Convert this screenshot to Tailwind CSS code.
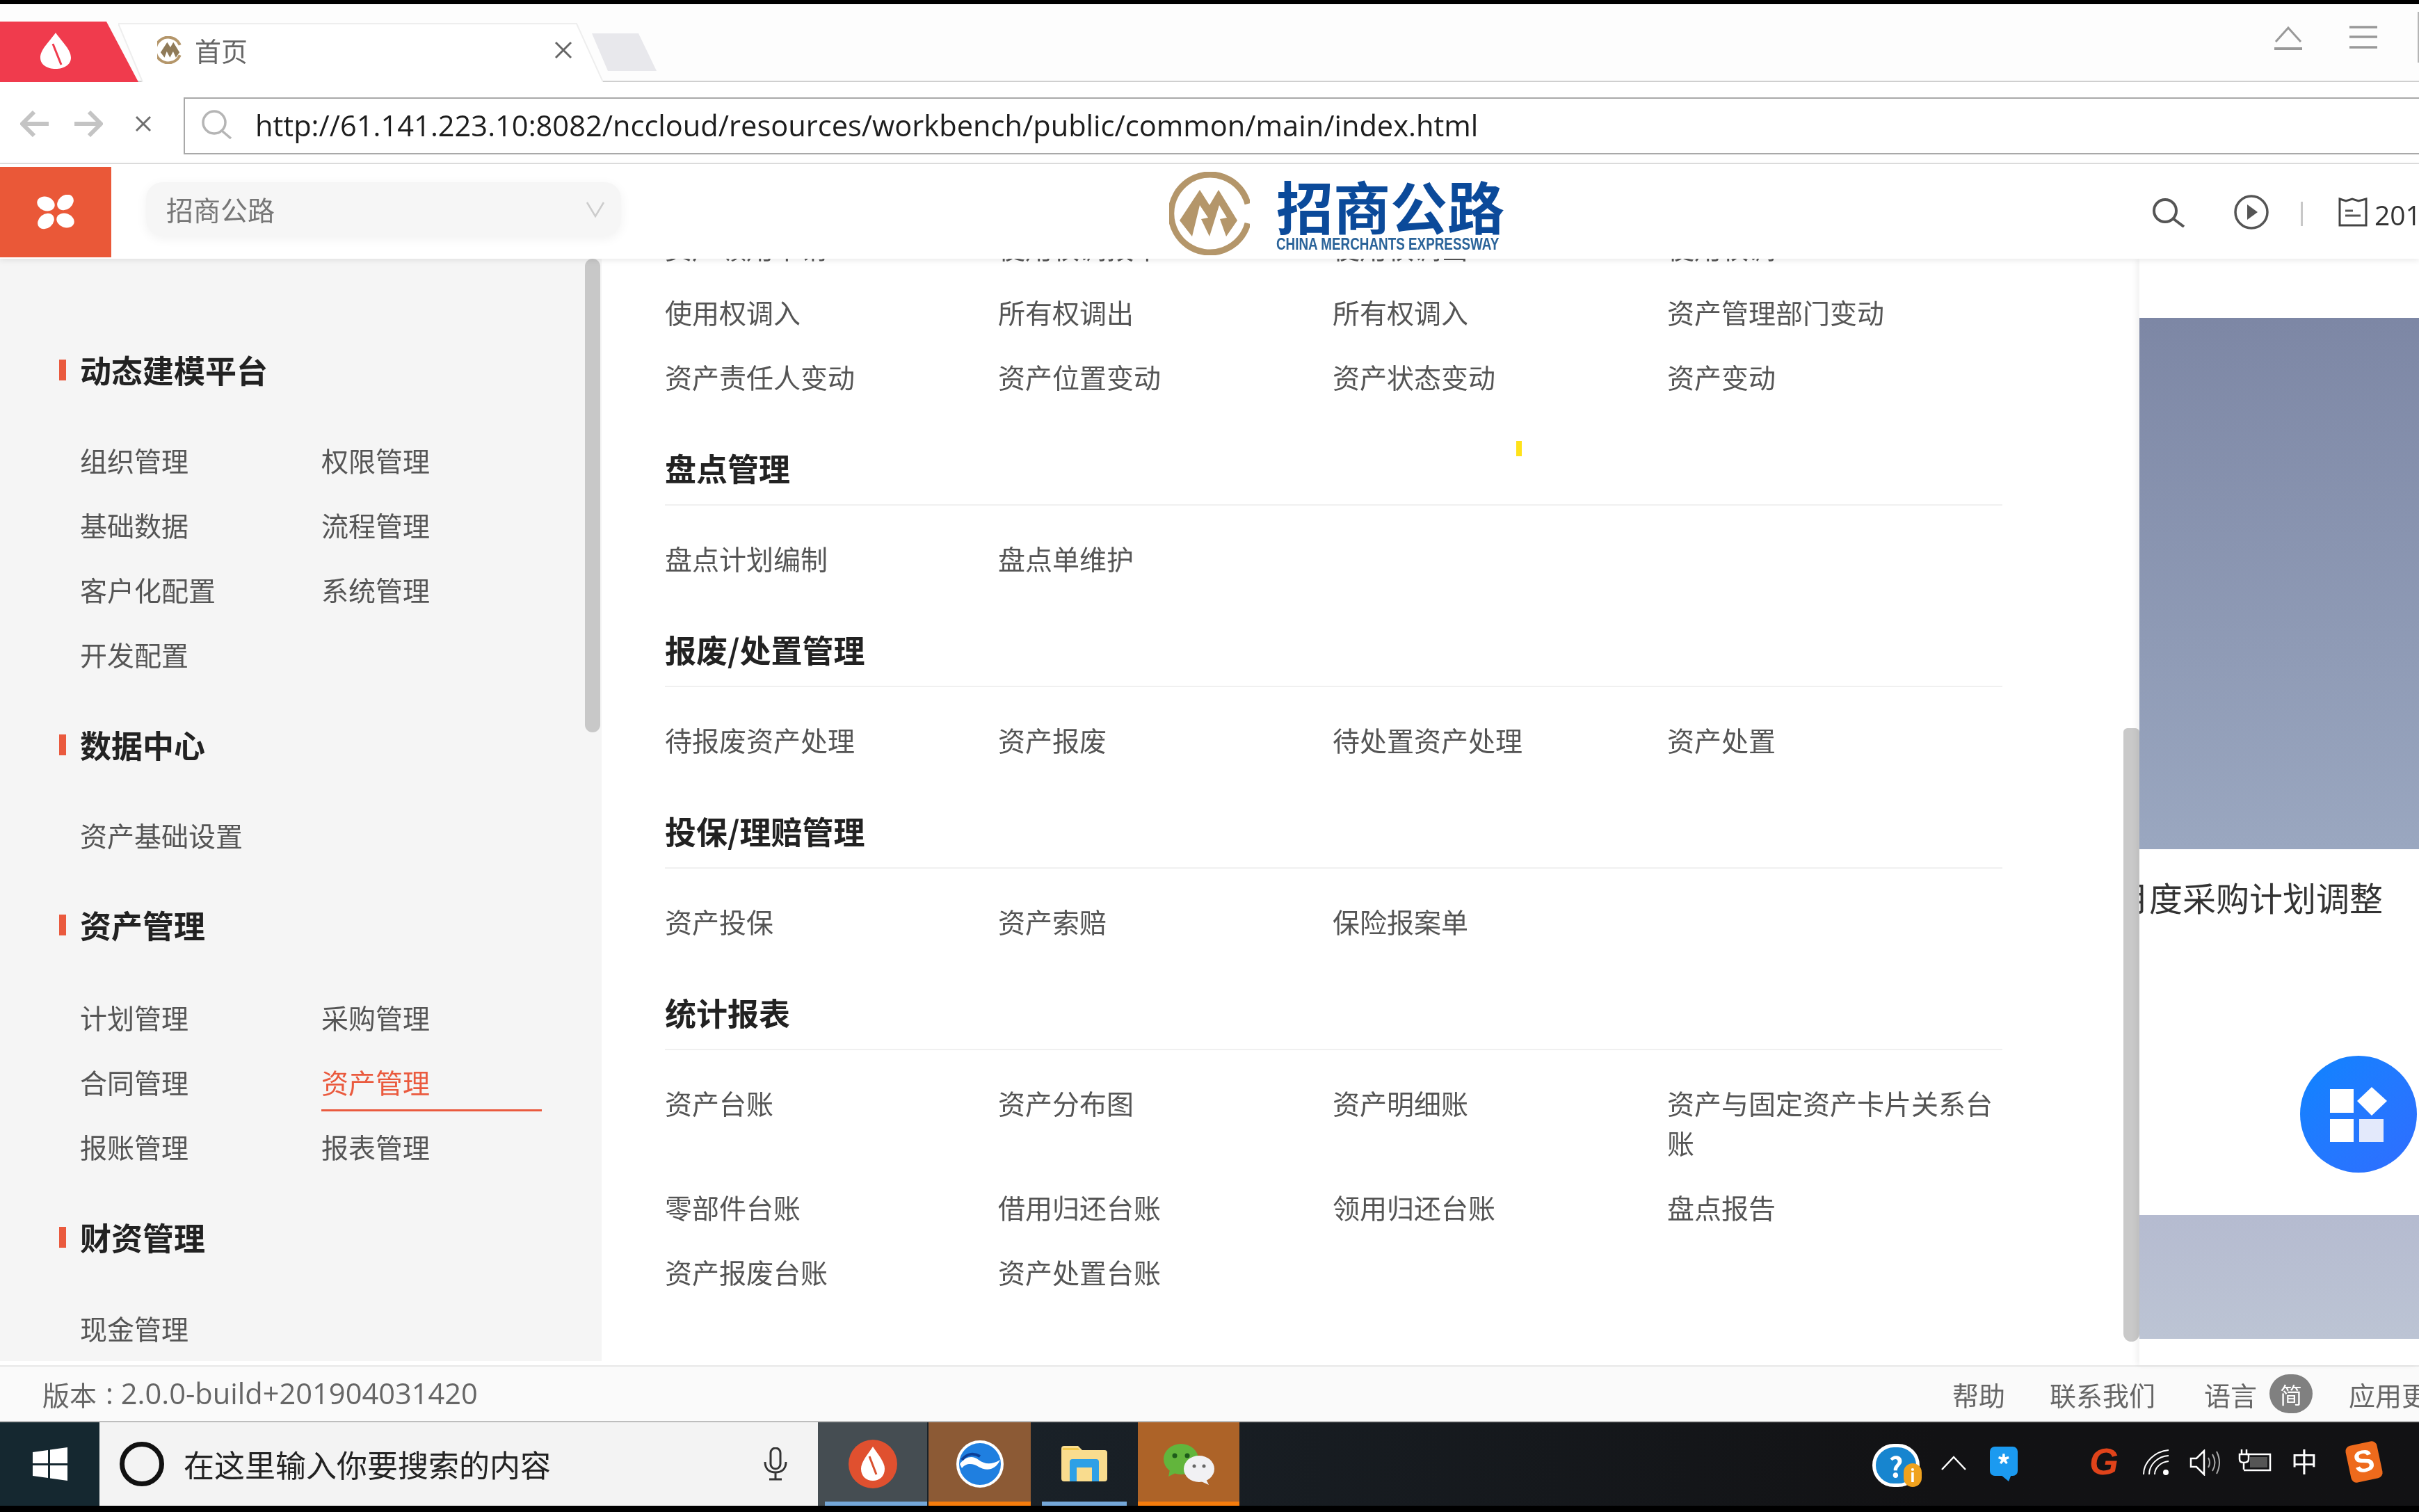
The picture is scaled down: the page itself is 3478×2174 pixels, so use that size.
<!DOCTYPE html>
<html lang="zh-CN">
  <head>
    <meta charset="UTF-8" />
    <title>首页</title>
    <script src="https://cdn.jsdelivr.net/npm/@tailwindcss/browser@4"></script>
  </head>
  <body class="bg-black">
    <div class="w-[3478px] h-[2174px] overflow-hidden flex flex-col bg-black [font-family:'Noto_Sans_CJK_SC',sans-serif] blur-[0.7px]">
      <div class="h-[6px] shrink-0 bg-black"></div>

      <!-- tab strip -->
      <div class="h-[112px] shrink-0 bg-[#fdfdfd] border-b-2 border-[#cfcfcf] flex relative">
        <div class="mt-[25px] w-[199px] h-[87px] shrink-0 bg-[#f03b4d] [clip-path:polygon(0_0,153px_0,199px_100%,0_100%)] flex pl-[57px] pt-[15px]">
          <svg width="46" height="54" viewBox="0 0 46 54"><path d="M23 1C32 14 45 25 45 37C45 47 35 53 23 53C11 53 1 47 1 37C1 25 14 14 23 1Z" fill="#fff"/><path d="M19 17L31 47" stroke="#f03b4d" stroke-width="3"/></svg>
        </div>
        <div class="-ml-[29px] mt-[27px] w-[697px] h-[85px] shrink-0 relative flex items-center pl-[56px] pr-[44px] pb-[8px]">
          <svg class="absolute left-0 top-0" width="697" height="85" viewBox="0 0 697 85"><path d="M35 85L0 1H659L697 85" fill="#fff" stroke="#eeeeee" stroke-width="2"/></svg>
          <svg class="relative shrink-0" width="38" height="40" viewBox="0 0 116 120"><path d="M100 38A56 56 0 1 0 100 82" fill="none" stroke="#b4966a" stroke-width="12"/><path d="M44 26L58 48L71 26L98 70L82 93L70 66L56 93L42 66L32 93L15 70Z" fill="#8f7a58"/></svg>
          <span class="relative ml-[16px] text-[38px] leading-none text-[#666]">首页</span>
          <svg class="relative ml-auto" width="26" height="26" viewBox="0 0 26 26"><path d="M2 2L24 24M24 2L2 24" stroke="#666" stroke-width="3"/></svg>
        </div>
        <div class="-ml-[16px] mt-[42px] w-[93px] h-[54px] shrink-0 bg-[#e8e8ec] [clip-path:polygon(0_0,67px_0,93px_100%,23px_100%)]"></div>
        <svg class="ml-[2325px] mt-[31px] shrink-0" width="42" height="36" viewBox="0 0 42 36"><path d="M3 23L21 3L39 23" fill="none" stroke="#999" stroke-width="3"/><path d="M1 33H41" stroke="#999" stroke-width="4"/></svg>
        <svg class="ml-[66px] mt-[30px] shrink-0" width="42" height="34" viewBox="0 0 42 34"><path d="M1 3H41M1 17H41M1 32H41" stroke="#999" stroke-width="3.5"/></svg>
        <div class="ml-[57px] mt-[11px] w-[3px] h-[73px] bg-[#b5b5b5] shrink-0"></div>
      </div>

      <!-- address bar -->
      <div class="h-[118px] shrink-0 bg-white border-b-2 border-[#dedede] flex pl-[29px] pt-[22px]">
        <div class="h-[76px] flex items-center shrink-0">
          <svg width="42" height="38" viewBox="0 0 42 38"><path d="M20 2L3 19L20 36M3 19H41" fill="none" stroke="#c4c4c4" stroke-width="6"/></svg>
          <svg class="ml-[35px]" width="42" height="38" viewBox="0 0 42 38"><path d="M22 2L39 19L22 36M39 19H1" fill="none" stroke="#c4c4c4" stroke-width="6"/></svg>
          <svg class="ml-[46px]" width="24" height="24" viewBox="0 0 24 24"><path d="M2 2L22 22M22 2L2 22" stroke="#6e6e6e" stroke-width="3"/></svg>
        </div>
        <div class="ml-[46px] h-[82px] w-[3300px] shrink-0 bg-white border-2 border-[#a9a9a9] flex items-center pl-[22px]">
          <svg class="shrink-0 -mt-[4px]" width="46" height="42" viewBox="0 0 46 42"><circle cx="20" cy="18" r="16" fill="none" stroke="#b5b5b5" stroke-width="3.5"/><path d="M31 30L44 41" stroke="#b5b5b5" stroke-width="3.5"/></svg>
          <span class="ml-[33px] text-[41.6px] leading-none text-[#1d1d1d] whitespace-nowrap [font-family:'Open_Sans',sans-serif]">http://61.141.223.10:8082/nccloud/resources/workbench/public/common/main/index.html</span>
        </div>
      </div>

      <!-- app header -->
      <div class="h-[136px] shrink-0 bg-white flex relative z-10 pt-[4px] shadow-[0_3px_8px_rgba(0,0,0,0.08)]">
        <div class="w-[160px] h-[130px] shrink-0 bg-[#ea5838] flex items-center justify-center">
          <svg width="56" height="50" viewBox="0 0 56 50"><g fill="#fff"><ellipse cx="14" cy="13" rx="13" ry="10" transform="rotate(20 14 13)"/><ellipse cx="42" cy="11" rx="13" ry="10" transform="rotate(-40 42 11)"/><ellipse cx="14" cy="38" rx="13" ry="10" transform="rotate(-40 14 38)"/><ellipse cx="42" cy="37" rx="13" ry="10" transform="rotate(20 42 37)"/></g></svg>
        </div>
        <div class="ml-[50px] mt-[22px] w-[683px] h-[77px] shrink-0 bg-[#f6f6f6] rounded-[24px] shadow-[0_4px_16px_rgba(0,0,0,0.06)] flex items-center pl-[29px] pr-[23px]">
          <span class="text-[39px] leading-none text-[#777]">招商公路</span>
          <svg class="ml-auto" width="28" height="24" viewBox="0 0 28 24"><path d="M2 2L14 22L26 2" fill="none" stroke="#ccc" stroke-width="2.5"/></svg>
        </div>
        <svg class="ml-[788px] mt-[7px] shrink-0" width="116" height="120" viewBox="0 0 116 120"><path d="M113 46A56 56 0 1 0 113 74" fill="none" stroke="#b4966a" stroke-width="9"/><path d="M44 26L58 48L71 26L98 70L82 93L73 68L83 66L72 48L58 93L46 68L56 66L44 48L33 93L15 70Z" fill="#b4966a"/></svg>
        <div class="ml-[38px] mt-[13px] w-[328px] shrink-0 flex flex-col">
          <span class="text-[82px] leading-[84px] font-bold text-[#0b4a9a]">招商公路</span>
          <span class="text-[23px] leading-[22px] mt-[3px] font-bold text-[#2a6399] whitespace-nowrap origin-left scale-x-[0.82] [font-family:'Liberation_Sans',sans-serif]">CHINA MERCHANTS EXPRESSWAY</span>
        </div>
        <svg class="ml-[929px] mt-[45px] shrink-0" width="50" height="42" viewBox="0 0 50 42"><circle cx="21" cy="18" r="16" fill="none" stroke="#555" stroke-width="4"/><path d="M32 29L48 41" stroke="#555" stroke-width="4"/></svg>
        <svg class="ml-[70px] mt-[40px] shrink-0" width="50" height="50" viewBox="0 0 50 50"><circle cx="25" cy="25" r="23" fill="none" stroke="#555" stroke-width="3.5"/><path d="M19 14L34 25L19 36Z" fill="#555"/></svg>
        <div class="ml-[46px] mt-[50px] w-[3px] h-[35px] bg-[#c8c8c8] shrink-0"></div>
        <svg class="ml-[50px] mt-[43px] shrink-0" width="44" height="44" viewBox="0 0 44 44"><path d="M3 3L12 6L21 3L30 6L41 3V41H3Z" fill="none" stroke="#444" stroke-width="3"/><path d="M11 20H22M11 27H33" stroke="#555" stroke-width="3"/></svg>
        <span class="ml-[9px] mt-[50px] text-[39px] leading-[38px] text-[#333] whitespace-nowrap [font-family:'Open_Sans',sans-serif]">2019-04-03</span>
      </div>

      <!-- content -->
      <div class="h-[1591px] shrink-0 flex bg-white">
        <!-- side menu -->
        <div class="w-[865px] shrink-0 bg-[#f5f5f5] flex h-[1585px]">
          <div class="w-[841px] shrink-0 overflow-hidden pl-[85px] pt-[124px]">
            <div class="h-[72px] flex items-center"><i class="w-[10px] h-[30px] bg-[#ea5a3e]"></i><span class="ml-[20px] text-[45px] font-bold text-[#222]">动态建模平台</span></div>
            <div class="mt-[47px] grid grid-cols-[347px_347px] pl-[30px] text-[39px] text-[#555]">
              <div class="h-[93px] leading-[93px]">组织管理</div><div class="h-[93px] leading-[93px]">权限管理</div>
              <div class="h-[93px] leading-[93px]">基础数据</div><div class="h-[93px] leading-[93px]">流程管理</div>
              <div class="h-[93px] leading-[93px]">客户化配置</div><div class="h-[93px] leading-[93px]">系统管理</div>
              <div class="h-[93px] leading-[93px]">开发配置</div>
            </div>
            <div class="mt-[48px] h-[72px] flex items-center"><i class="w-[10px] h-[30px] bg-[#ea5a3e]"></i><span class="ml-[20px] text-[45px] font-bold text-[#222]">数据中心</span></div>
            <div class="mt-[47px] grid grid-cols-[347px_347px] pl-[30px] text-[39px] text-[#555]">
              <div class="h-[93px] leading-[93px]">资产基础设置</div>
            </div>
            <div class="mt-[47px] h-[72px] flex items-center"><i class="w-[10px] h-[30px] bg-[#ea5a3e]"></i><span class="ml-[20px] text-[45px] font-bold text-[#222]">资产管理</span></div>
            <div class="mt-[50px] grid grid-cols-[347px_347px] pl-[30px] text-[39px] text-[#555]">
              <div class="h-[93px] leading-[93px]">计划管理</div><div class="h-[93px] leading-[93px]">采购管理</div>
              <div class="h-[93px] leading-[93px]">合同管理</div><div class="h-[89px] w-[317px] leading-[93px] text-[#ea5a3e] border-b-[3px] border-[#ea5a3e]">资产管理</div>
              <div class="h-[93px] leading-[93px]">报账管理</div><div class="h-[93px] leading-[93px]">报表管理</div>
            </div>
            <div class="mt-[48px] h-[72px] flex items-center"><i class="w-[10px] h-[30px] bg-[#ea5a3e]"></i><span class="ml-[20px] text-[45px] font-bold text-[#222]">财资管理</span></div>
            <div class="mt-[48px] grid grid-cols-[347px_347px] pl-[30px] text-[39px] text-[#555]">
              <div class="h-[93px] leading-[93px]">现金管理</div>
            </div>
          </div>
          <div class="w-[24px] shrink-0">
            <div class="w-[22px] h-[681px] bg-[#c8c8c8] rounded-full"></div>
          </div>
        </div>

        <!-- main menu panel -->
        <div class="w-[2188px] shrink-0 overflow-hidden pl-[91px] relative h-[1585px]">
          <div class="-mt-[63px] w-[1923px] text-[39px] text-[#555]">
            <div class="grid grid-cols-[479px_481px_481px_482px]">
              <div class="py-[18px] leading-[57px]">资产领用申请</div><div class="py-[18px] leading-[57px]">使用权调拨单</div><div class="py-[18px] leading-[57px]">使用权调出</div><div class="py-[18px] leading-[57px]">使用权调</div>
              <div class="py-[18px] leading-[57px]">使用权调入</div><div class="py-[18px] leading-[57px]">所有权调出</div><div class="py-[18px] leading-[57px]">所有权调入</div><div class="py-[18px] leading-[57px]">资产管理部门变动</div>
              <div class="py-[18px] leading-[57px]">资产责任人变动</div><div class="py-[18px] leading-[57px]">资产位置变动</div><div class="py-[18px] leading-[57px]">资产状态变动</div><div class="py-[18px] leading-[57px]">资产变动</div>
            </div>

            <div class="mt-[33px] h-[106px] border-b-2 border-[#f0f0f0] flex items-start pt-[29px] text-[45px] leading-[46px] font-bold text-[#222]">盘点管理</div>
            <div class="mt-[29px] grid grid-cols-[479px_481px_481px_482px]">
              <div class="py-[18px] leading-[57px]">盘点计划编制</div><div class="py-[18px] leading-[57px]">盘点单维护</div>
            </div>

            <div class="mt-[33px] h-[106px] border-b-2 border-[#f0f0f0] flex items-start pt-[29px] text-[45px] leading-[46px] font-bold text-[#222]">报废/处置管理</div>
            <div class="mt-[29px] grid grid-cols-[479px_481px_481px_482px]">
              <div class="py-[18px] leading-[57px]">待报废资产处理</div><div class="py-[18px] leading-[57px]">资产报废</div><div class="py-[18px] leading-[57px]">待处置资产处理</div><div class="py-[18px] leading-[57px]">资产处置</div>
            </div>

            <div class="mt-[33px] h-[106px] border-b-2 border-[#f0f0f0] flex items-start pt-[29px] text-[45px] leading-[46px] font-bold text-[#222]">投保/理赔管理</div>
            <div class="mt-[29px] grid grid-cols-[479px_481px_481px_482px]">
              <div class="py-[18px] leading-[57px]">资产投保</div><div class="py-[18px] leading-[57px]">资产索赔</div><div class="py-[18px] leading-[57px]">保险报案单</div>
            </div>

            <div class="mt-[33px] h-[106px] border-b-2 border-[#f0f0f0] flex items-start pt-[29px] text-[45px] leading-[46px] font-bold text-[#222]">统计报表</div>
            <div class="mt-[29px] grid grid-cols-[479px_481px_481px_482px]">
              <div class="py-[18px] leading-[57px]">资产台账</div><div class="py-[18px] leading-[57px]">资产分布图</div><div class="py-[18px] leading-[57px]">资产明细账</div><div class="py-[18px] leading-[57px]">资产与固定资产卡片关系台账</div>
              <div class="py-[18px] leading-[57px]">零部件台账</div><div class="py-[18px] leading-[57px]">借用归还台账</div><div class="py-[18px] leading-[57px]">领用归还台账</div><div class="py-[18px] leading-[57px]">盘点报告</div>
              <div class="py-[18px] leading-[57px]">资产报废台账</div><div class="py-[18px] leading-[57px]">资产处置台账</div>
            </div>
          </div>
          <!-- mouse cursor mark -->
          <div class="absolute left-[1315px] top-[262px] w-[8px] h-[22px] bg-[#ffe21a]"></div>
        </div>

        <div class="w-[23px] shrink-0">
          <div class="mt-[675px] w-[23px] h-[882px] bg-[#c9c9c9] rounded-b-[12px] rounded-t-[6px]"></div>
        </div>

        <!-- workbench behind the menu -->
        <div class="flex-1 relative overflow-hidden shadow-[-4px_0_8px_rgba(0,0,0,0.06)]">
          <div class="mt-[85px] h-[764px] bg-gradient-to-b from-[#7d87a5] to-[#9aa7c0]"></div>
          <div class="h-[526px] bg-white pt-[40px] overflow-hidden">
            <div class="-ml-[34px] text-[48px] leading-[56px] text-[#333] whitespace-nowrap">月度采购计划调整</div>
          </div>
          <div class="h-[178px] bg-gradient-to-b from-[#b5bbd0] to-[#bcc4d4]"></div>
          <div class="absolute left-[231px] top-[1146px] w-[168px] h-[168px] rounded-full bg-gradient-to-br from-[#0a84ff] to-[#2f6dff] flex items-center justify-center">
            <svg width="82" height="79" viewBox="0 0 82 79"><g fill="#fff"><rect x="0" y="3" width="34" height="34"/><path d="M60 0L82 20L60 41L39 20Z"/><rect x="0" y="46" width="34" height="33"/><rect x="42" y="46" width="35" height="33" fill="#e3e9fb"/></g></svg>
          </div>
        </div>
      </div>

      <!-- status bar -->
      <div class="h-[82px] shrink-0 bg-[#fafafa] border-t-2 border-[#e8e8e8] border-b-2 border-b-[#bdbdbd] flex items-center text-[38px] text-[#666] whitespace-nowrap">
        <div class="w-[2807px] shrink-0 pl-[61px] flex items-center">
          <span class="text-[39px]">版本</span><span class="ml-[13px] text-[41.6px] leading-none [font-family:'Open_Sans',sans-serif]">: 2.0.0-build+201904031420</span>
        </div>
        <span>帮助</span>
        <span class="ml-[64px]">联系我们</span>
        <span class="ml-[70px]">语言</span>
        <span class="ml-[18px] w-[62px] h-[56px] shrink-0 rounded-full bg-[#808080] text-white text-[32px] flex items-center justify-center">简</span>
        <span class="ml-[52px]">应用更多</span>
      </div>

      <!-- windows taskbar -->
      <div class="h-[120px] shrink-0 flex bg-gradient-to-r from-[#1a2229] from-40% to-[#121214] to-80%">
        <div class="w-[143px] shrink-0 bg-[#152830] flex items-center pl-[47px]">
          <svg width="50" height="48" viewBox="0 0 50 48"><path d="M0 7L22 4V23H0ZM25 3.5L50 0V23H25ZM0 26H22V44L0 41ZM25 26H50V48L25 44.5Z" fill="#fff"/></svg>
        </div>
        <div class="w-[1033px] shrink-0 bg-[#f3f3f3] flex items-center pl-[29px]">
          <div class="w-[64px] h-[64px] shrink-0 rounded-full border-[7px] border-[#111]"></div>
          <span class="ml-[28px] w-[528px] shrink-0 text-[44px] leading-none text-[#222] whitespace-nowrap">在这里输入你要搜索的内容</span>
          <svg class="ml-[306px] shrink-0" width="34" height="48" viewBox="0 0 34 48"><rect x="10" y="1" width="14" height="30" rx="7" fill="none" stroke="#333" stroke-width="3"/><path d="M2 21C2 32 9 36 17 36C25 36 32 32 32 21M17 36V46M8 46H26" fill="none" stroke="#333" stroke-width="3"/></svg>
        </div>
        <div class="w-[157px] shrink-0 bg-[#454d52] relative flex items-center justify-center">
          <svg width="70" height="70" viewBox="0 0 70 70"><circle cx="35" cy="35" r="35" fill="#e0502f"/><path d="M35 10C43 22 52 32 52 42C52 53 44 59 35 59C26 59 18 53 18 42C18 32 27 22 35 10Z" fill="#fff"/><path d="M30 24L40 50" stroke="#d9502f" stroke-width="3"/></svg>
          <div class="absolute left-[10px] right-0 bottom-0 h-[6px] bg-[#74a7d8]"></div>
        </div>
        <div class="w-[2px] shrink-0"></div>
        <div class="w-[147px] shrink-0 bg-[#8c5a35] relative flex items-center justify-center">
          <svg width="68" height="68" viewBox="0 0 68 68"><circle cx="34" cy="34" r="32" fill="#1f7fe0" stroke="#fff" stroke-width="4"/><path d="M5 34C14 22 24 22 32 28C40 34 50 36 63 28C56 44 42 44 32 38C24 33 14 32 8 40Z" fill="#fff"/><path d="M8 28C16 18 26 18 34 23" fill="none" stroke="#0d3f97" stroke-width="4"/></svg>
          <div class="absolute left-0 right-0 bottom-0 h-[6px] bg-[#f57c0c]"></div>
        </div>
        <div class="w-[154px] shrink-0 relative flex items-center justify-center">
          <svg width="66" height="54" viewBox="0 0 66 54"><path d="M0 5Q0 1 4 1H24L30 7H62Q66 7 66 11V48Q66 52 62 52H4Q0 52 0 48Z" fill="#f9dc8e"/><path d="M2 4H24L26 7H2Z" fill="#f2c94c"/><path d="M12 52V24Q12 20 16 20H50Q54 20 54 24V52H44V32H22V52Z" fill="#2ea0e6"/></svg>
          <div class="absolute left-[16px] w-[122px] bottom-0 h-[6px] bg-[#74a7d8]"></div>
        </div>
        <div class="w-[146px] shrink-0 bg-[#ad6328] relative flex items-center justify-center">
          <svg width="74" height="60" viewBox="0 0 74 60"><ellipse cx="26" cy="23" rx="25" ry="22" fill="#62b53c"/><path d="M10 38L8 48L20 42Z" fill="#62b53c"/><circle cx="17" cy="18" r="3.5" fill="#1e5c1a"/><circle cx="35" cy="18" r="3.5" fill="#1e5c1a"/><ellipse cx="52" cy="37" rx="22" ry="19" fill="#f1f1f4"/><path d="M62 52L66 60L55 55Z" fill="#f1f1f4"/><circle cx="45" cy="33" r="2.5" fill="#666"/><circle cx="59" cy="33" r="2.5" fill="#666"/></svg>
          <div class="absolute left-0 right-0 bottom-0 h-[6px] bg-[#f57c0c]"></div>
        </div>

        <!-- tray -->
        <div class="ml-[910px] mt-[31px] w-[68px] h-[62px] shrink-0 rounded-full bg-[#1785cf] border-[5px] border-white flex items-center justify-center relative text-white font-bold text-[40px] leading-none">?
          <span class="absolute -right-[8px] -bottom-[5px] w-[26px] h-[34px] rounded-full bg-[#f0a21e] text-[24px] text-white flex items-center justify-center">i</span>
        </div>
        <svg class="ml-[30px] mt-[48px] shrink-0" width="38" height="22" viewBox="0 0 38 22"><path d="M2 20L19 2L36 20" fill="none" stroke="#fff" stroke-width="2.5"/></svg>
        <div class="ml-[33px] mt-[35px] w-[40px] h-[42px] shrink-0 rounded-[7px] bg-[#1b9af0] text-white font-bold text-[38px] leading-[50px] text-center relative">*
          <svg class="absolute left-[15px] top-[40px]" width="16" height="10" viewBox="0 0 16 10"><path d="M0 0H16L12 10Z" fill="#1b9af0"/></svg>
        </div>
        <span class="ml-[103px] mt-[24px] w-[42px] shrink-0 text-[54px] leading-[64px] font-bold italic text-[#e0431a] [font-family:'Liberation_Sans',sans-serif]">G</span>
        <svg class="ml-[34px] mt-[39px] shrink-0" width="40" height="38" viewBox="0 0 40 38"><g fill="none" stroke="#fff" stroke-width="2"><path d="M2 36C2 18 18 3 38 1"/><path d="M10 36C10 22 22 10 38 9"/><path d="M18 36C18 26 27 18 38 17"/></g><circle cx="34" cy="33" r="4" fill="#fff"/></svg>
        <svg class="ml-[28px] mt-[39px] shrink-0" width="45" height="38" viewBox="0 0 45 38"><path d="M2 13H10L21 2V36L10 25H2Z" fill="none" stroke="#fff" stroke-width="2.5"/><path d="M27 12Q31 19 27 26M33 7Q40 19 33 31M39 3Q47 19 39 35" fill="none" stroke="#aaa" stroke-width="2"/></svg>
        <svg class="ml-[25px] mt-[39px] shrink-0" width="48" height="34" viewBox="0 0 48 34"><path d="M5 0V7M12 0V7M2 7H15V14Q15 19 8 19Q2 19 2 14ZM8 19V29" fill="none" stroke="#fff" stroke-width="2.5"/><path d="M12 7H46V30H8" fill="none" stroke="#fff" stroke-width="2.5"/><rect x="17" y="11" width="25" height="15" fill="#555"/></svg>
        <span class="ml-[28px] mt-[30px] w-[38px] shrink-0 text-[38px] leading-[50px] text-white">中</span>
        <div class="ml-[44px] mt-[30px] w-[46px] h-[54px] shrink-0 rounded-[8px] bg-[#ee6a1c] -rotate-12 text-white font-bold text-[44px] leading-[52px] text-center [font-family:'Liberation_Sans',sans-serif]">S</div>
      </div>
    </div>
  </body>
</html>
